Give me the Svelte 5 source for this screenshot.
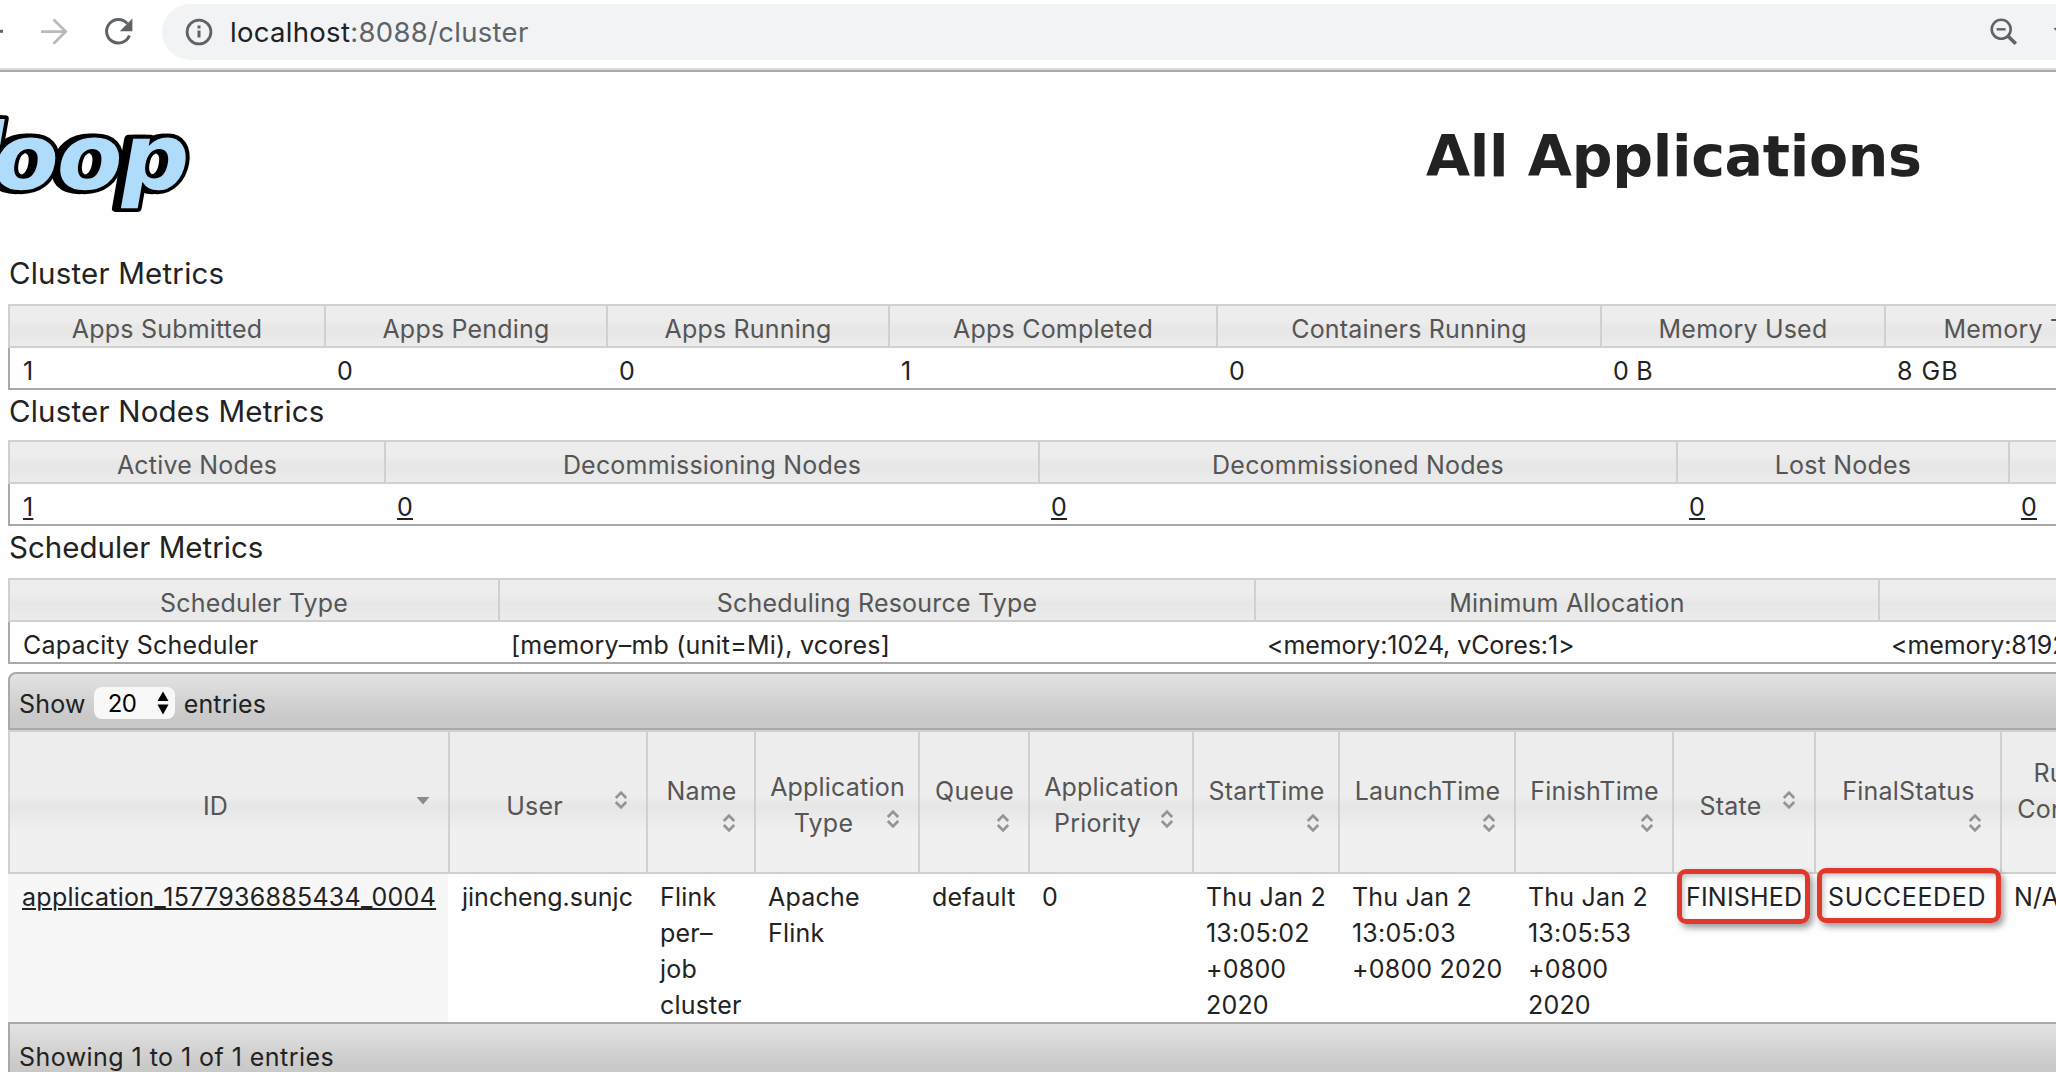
<script>
  const metrics = [
    {
      title: 'Cluster Metrics', id: 'cluster',
      columns: [
        ['Apps Submitted', '1'], ['Apps Pending', '0'], ['Apps Running', '0'], ['Apps Completed', '1'],
        ['Containers Running', '0'], ['Memory Used', '0 B'], ['Memory Total', '8 GB']
      ]
    },
    {
      title: 'Cluster Nodes Metrics', id: 'nodes', links: true,
      columns: [['Active Nodes', '1'], ['Decommissioning Nodes', '0'], ['Decommissioned Nodes', '0'], ['Lost Nodes', '0'], ['', '0']]
    },
    {
      title: 'Scheduler Metrics', id: 'scheduler',
      columns: [
        ['Scheduler Type', 'Capacity Scheduler'],
        ['Scheduling Resource Type', '[memory–mb (unit=Mi), vcores]'],
        ['Minimum Allocation', '<memory:1024, vCores:1>'],
        ['', '<memory:8192,']
      ]
    }
  ];

  // kind: side = icon beside the label, below = icon on its own line
  const columns = [
    { kind: 'side', lines: ['ID'], sorted: true },
    { kind: 'side', lines: ['User'] },
    { kind: 'below', lines: ['Name'] },
    { kind: 'two', lines: ['Application', 'Type'] },
    { kind: 'below', lines: ['Queue'] },
    { kind: 'two', lines: ['Application', 'Priority'] },
    { kind: 'below', lines: ['StartTime'] },
    { kind: 'below', lines: ['LaunchTime'] },
    { kind: 'below', lines: ['FinishTime'] },
    { kind: 'side', lines: ['State'] },
    { kind: 'below', lines: ['FinalStatus'] },
    { kind: 'three', lines: ['Running', 'Containers'] }
  ];

  const app = [
    ['jincheng.sunjc'],
    ['Flink', 'per–', 'job', 'cluster'],
    ['Apache', 'Flink'],
    ['default'],
    ['0'],
    ['Thu Jan 2', '13:05:02', '+0800', '2020'],
    ['Thu Jan 2', '13:05:03', '+0800 2020'],
    ['Thu Jan 2', '13:05:53', '+0800', '2020'],
    ['FINISHED'],
    ['SUCCEEDED'],
    ['N/A']
  ];
</script>

{#snippet sortIcon(sorted)}
  <span class="sort">
    <svg width="16" height="20" viewBox="0 0 16 20">
      {#if sorted}
        <path d="M1.5 7h13L8 14.5z" fill="#8a8a8a" />
      {:else}
        <path d="M2.8 8 8 2.6 13.2 8M2.8 12 8 17.4 13.2 12" fill="none" stroke="#949494" stroke-width="2.7" />
      {/if}
    </svg>
  </span>
{/snippet}

<div class="window">
  <div class="browser">
    <div class="nav">
      <svg width="162" height="68" viewBox="0 0 162 68" fill="none">
        <path d="M0 31.3h3" stroke="#5f6368" stroke-width="3" />
        <path d="M41 31.6h24.5M53.5 19.5 65.7 31.6 53.5 43.8" stroke="#bababa" stroke-width="2.8" />
        <path d="M127.4 23.6A11.8 11.8 0 1 0 129.4 35.5" stroke="#5f6368" stroke-width="3" />
        <path d="M132.4 18.6v12.6h-12.6z" fill="#5f6368" />
      </svg>
    </div>
    <div class="omnibox">
      <svg class="info" width="28" height="28" viewBox="0 0 28 28" fill="none" stroke="#5f6368">
        <circle cx="14" cy="14" r="11.9" stroke-width="2.8" />
        <path d="M14 12.4v7.2M14 7.4v3" stroke-width="3" />
      </svg>
      <span class="url">localhost<span class="rest">:8088/cluster</span></span>
      <svg class="tools" width="66" height="56" viewBox="0 0 66 56" fill="none" stroke="#5f6368">
        <circle cx="11.2" cy="25.3" r="9.5" stroke-width="2.6" />
        <path d="M6.6 25.3h9" stroke-width="2.4" />
        <path d="M17.8 32 25.8 39.8" stroke-width="3.6" />
        <path d="M63.5 24.2 66 23.8v3z" fill="#5f6368" stroke="none" />
      </svg>
    </div>
  </div>

  <header>
    <svg class="logo" width="210" height="120" viewBox="0 0 210 120">
      <g transform="translate(183 88) skewX(-10) scale(1 0.96)">
        <text class="glyphs under" x="-5" text-anchor="end" dx="0 0 0 -10">hadoop</text>
        <text class="glyphs edge" text-anchor="end" dx="0 0 0 -10">hadoop</text>
        <text class="glyphs" text-anchor="end" dx="0 0 0 -10">hadoop</text>
      </g>
    </svg>
    <h1>All Applications</h1>
  </header>

  <main>
    {#each metrics as m}
      <h2 class={m.id}>{m.title}</h2>
      <div class="metrics {m.id}">
        {#each m.columns as [label, value]}
          <div class="col">
            <div class="label">{label}</div>
            <div class="value" class:tight={value.startsWith('<')} class:loose={value.endsWith('GB')}>{#if m.links}<a href="#nodes">{value}</a>{:else}{value}{/if}</div>
          </div>
        {/each}
      </div>
    {/each}

    <div class="bar top">
      <span>Show</span>
      <span class="select"><span class="count">20</span>
        <svg width="12" height="24" viewBox="0 0 12 24"><path d="M6 .5 11.5 10H.5zM6 23.500 .5 13.500h11z" /></svg>
      </span>
      <span>entries</span>
    </div>

    <div class="grid head">
      {#each columns as c}
        <div class="th {c.kind}">
          {#if c.kind === 'side'}
            <div class="line split"><span>{c.lines[0]}</span>{@render sortIcon(c.sorted)}</div>
          {:else if c.kind === 'two'}
            <div class="line">{c.lines[0]}</div>
            <div class="line split"><span>{c.lines[1]}</span>{@render sortIcon(false)}</div>
          {:else if c.kind === 'below'}
            <div class="line">{c.lines[0]}</div>
            <div class="line split"><span></span>{@render sortIcon(false)}</div>
          {:else}
            {#each c.lines as l}<div class="line">{l}</div>{/each}
          {/if}
        </div>
      {/each}
    </div>

    <div class="grid body">
      <div class="td id"><a href="#app">application_1577936885434_0004</a></div>
      {#each app as lines}
        <div class="td" class:wide={lines[0] === 'SUCCEEDED'} class:user={lines[0].startsWith('jin')}>
          {#each lines as l}<div>{l}</div>{/each}
        </div>
      {/each}
      <div class="mark finished"></div>
      <div class="mark succeeded"></div>
    </div>

    <div class="bar bottom">Showing 1 to 1 of 1 entries</div>
  </main>
</div>

<style>
  :global(body) { margin: 0; background: #fff; overflow: hidden; }
  .window {
    width: 2056px; height: 1072px; overflow: hidden; background: #fefefe;
    font-family: Inter, "Liberation Sans", sans-serif; font-size: 25px; line-height: 36px;
    letter-spacing: 0.2px; color: #222;
  }
  .window * { box-sizing: border-box; }
  svg { display: block; flex: none; }

  .browser { display: flex; height: 72px; border-bottom: 2px solid #a9a9a9; box-shadow: inset 0 -2px #dcdcdc; background: #fff; }
  .nav { width: 162px; flex: none; }
  .omnibox { display: flex; align-items: center; flex: 1; height: 56px; margin-top: 4px; padding-left: 23px; border-radius: 28px 0 0 28px; background: #f1f3f4; }
  .url { margin-left: 17px; flex: 1; font-size: 27.5px; letter-spacing: 0.3px; color: #202124; }
  .rest { color: #5f6368; }

  header { display: flex; height: 180px; }
  .logo { margin-top: 29px; }
  .glyphs { font: bold 96px "DejaVu Sans", sans-serif; letter-spacing: -2px; fill: #b0dcfc; }
  .edge, .under { fill: #000; stroke: #000; stroke-width: 8px; stroke-linejoin: round; }
  h1 { margin: 51px 0 0 1216px; font: bold 57px/66px "DejaVu Sans", sans-serif; letter-spacing: -0.3px; white-space: nowrap; color: #222; }

  main { padding-left: 8px; width: 2200px; }
  h2 { margin: 0; height: 52px; padding-left: 1px; font-size: 29.5px; font-weight: 400; line-height: 42px; letter-spacing: 0.2px; }
  h2.nodes { height: 50px; }
  h2.scheduler { letter-spacing: 0; }

  .metrics { display: grid; height: 86px; border-bottom: 2px solid #a9a9a9; }
  .metrics.cluster { grid-template-columns: 316px 282px 282px 328px 384px 284px 282px; }
  .metrics.nodes { grid-template-columns: 376px 654px 638px 332px 200px; }
  .metrics.scheduler { grid-template-columns: 490px 756px 624px 400px; }
  .label {
    height: 44px; padding-top: 5px; text-align: center; color: #555; line-height: 36px;
    border: solid #d0d0d0; border-width: 2px 0 2px 2px;
    background: linear-gradient(#ededed calc(50% - 6px), #e6e6e6 calc(50% + 4px), #f0f0f0 calc(50% + 32px));
  }
  .value { height: 40px; padding: 5px 0 0 13px; white-space: nowrap; }
  .value.tight { letter-spacing: -0.08px; }
  .value.loose { letter-spacing: 1px; }
  .col:first-child .value { border-left: 2px solid #a9a9a9; }
  a { color: #222; text-decoration: underline; text-decoration-thickness: 2px; text-underline-offset: 2px; text-decoration-skip-ink: auto; }

  .bar { border: 2px solid #a9a9a9; background: linear-gradient(#e3e3e3, #cacaca 75%, #c8c8c8); }
  .bar.top { display: flex; align-items: center; height: 58px; margin-top: 8px; padding: 5px 0 0 9px; border-radius: 8px 0 0 0; }
  .select { display: flex; align-items: center; justify-content: space-between; width: 81px; height: 32px; margin: -2px 9px 0 8px; padding: 0 6px 0 14px; border-radius: 8px; background: #f8f8f8; color: #000; font-size: 24px; letter-spacing: -0.6px; }
  .count { padding-top: 2px; }
  .bar.bottom { height: 58px; padding: 15px 0 0 9px; letter-spacing: 0.45px; }

  .grid { display: grid; grid-template-columns: 440px 198px 108px 164px 110px 164px 146px 176px 158px 142px 186px 162px; }
  .head { height: 144px; border: solid #d0d0d0; border-width: 2px 0; color: #555; background: linear-gradient(#ededed calc(50% - 6px), #e6e6e6 calc(50% + 4px), #f0f0f0 calc(50% + 30px)); }
  .th { border-left: 2px solid #d0d0d0; padding: 0 13px 0 14px; min-width: 0; }
  .side { padding-top: 56px; }
  .below { padding-top: 41px; }
  .two { padding-top: 37px; }
  .three { padding-top: 23px; }
  .line { display: flex; justify-content: center; height: 36px; white-space: nowrap; }
  .split { margin-right: -4px; }
  .split > span:first-child { flex: 1; text-align: center; }
  .sort { display: flex; justify-content: center; width: 32px; padding-top: 4px; }
  .side .sort { padding-top: 2px; }

  .body { position: relative; height: 148px; grid-template-rows: 148px; }
  .td { padding: 5px 0 0 14px; white-space: nowrap; }
  .td.id { background: #f7f7f7; letter-spacing: 0.27px; }
  .td.user { letter-spacing: 0; }
  .td.wide { letter-spacing: 0.65px; }
  .mark { position: absolute; border: 5px solid #e0392b; border-radius: 9px; box-shadow: 3px 4px 6px rgb(0 0 0 / 38%), inset 2px 3px 5px rgb(0 0 0 / 22%); }
  .finished { left: 1669px; top: -5px; width: 133px; height: 55px; }
  .succeeded { left: 1809px; top: -6px; width: 184px; height: 55px; }
</style>
